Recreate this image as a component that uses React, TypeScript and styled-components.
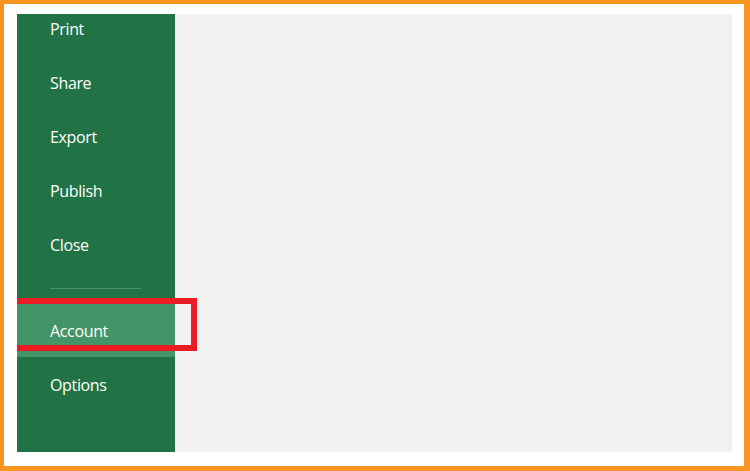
import React from 'react';
import styled, { createGlobalStyle } from 'styled-components';

const GlobalStyle = createGlobalStyle`
    html, body {
        margin: 0;
        padding: 0;
        background: #ffffff;
    }
    * {
        box-sizing: border-box;
    }
`;

const Frame = styled.div`
    width: 750px;
    height: 471px;
    border-style: solid;
    border-color: #f7961e;
    border-width: 4px 6px 5px 4px;
    padding: 10px 12px 14px 13px;
    display: flex;
    background: #ffffff;
`;

const Sidebar = styled.nav`
    width: 158px;
    background-color: #217346;
    display: flex;
    flex-direction: column;
    position: relative;
`;

const Menu = styled.ul`
    list-style: none;
    margin: -13px 0 0 0;
    padding: 0;
    display: flex;
    flex-direction: column;
`;

const MenuItem = styled.li<{ active?: boolean }>`
    height: 54px;
    display: flex;
    align-items: center;
    padding: 2px 0 0 33px;
    position: relative;
    font-family: "Open Sans", "Noto Sans", sans-serif;
    font-size: 16px;
    letter-spacing: -0.35px;
    color: #ffffff;
    background-color: ${(props) => (props.active ? '#439467' : 'transparent')};
`;

const Separator = styled.li`
    height: 32px;
    display: flex;
    align-items: center;
    padding-left: 33px;

    &::after {
        content: '';
        display: block;
        width: 91px;
        height: 1px;
        margin-top: 2px;
        background-color: #4f9068;
    }
`;

const Highlight = styled.span`
    position: absolute;
    top: -5px;
    left: 0;
    width: 180px;
    height: 53px;
    border: 6px solid #ec1c24;
    border-left: none;
    pointer-events: none;
`;

const Content = styled.main`
    flex: 1;
    background-color: #f1f1f1;
`;

const topItems = ['Print', 'Share', 'Export', 'Publish', 'Close'];

const App: React.FC = () => {
    return (
        <>
            <GlobalStyle />
            <Frame>
                <Sidebar>
                    <Menu>
                        {topItems.map((label) => (
                            <MenuItem key={label}>{label}</MenuItem>
                        ))}
                        <Separator />
                        <MenuItem active>
                            Account
                            <Highlight />
                        </MenuItem>
                        <MenuItem>Options</MenuItem>
                    </Menu>
                </Sidebar>
                <Content />
            </Frame>
        </>
    );
};

export default App;
